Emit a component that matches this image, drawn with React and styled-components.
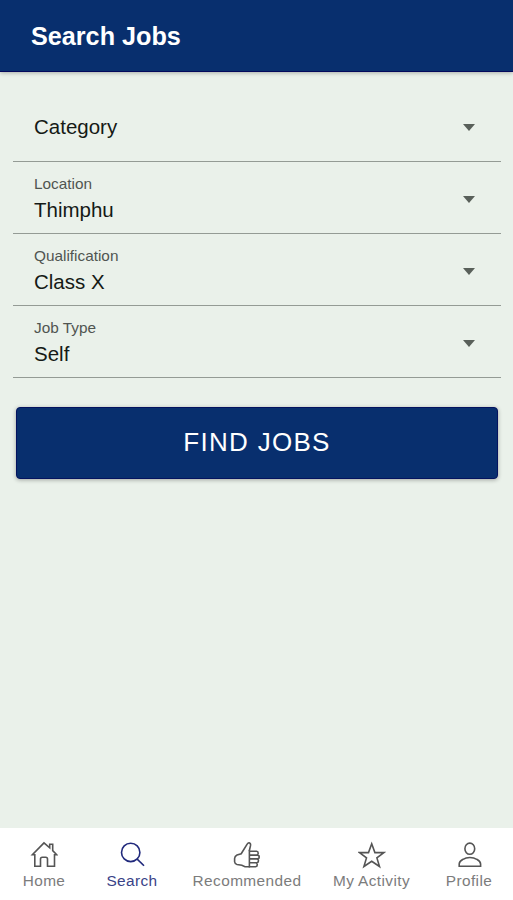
import React, { useState } from "react";
import styled, { createGlobalStyle } from "styled-components";

const HomeIcon = () => (
  <TabIcon viewBox="0 0 28 28">
    <path d="M14 1.9 2.4 13.8h2.4v11.5h5.7V18q0-1.8 1.8-1.8h3.4q1.8 0 1.8 1.8v7.3h7V13.8h2.3l-4.1-4.2V3.2h-3v3.6z" />
  </TabIcon>
);

const SearchIcon = () => (
  <TabIcon viewBox="0 0 28 28">
    <circle cx="12.7" cy="11.4" r="9.2" />
    <path d="m19.2 18.1 6.8 6.7" />
  </TabIcon>
);

const ThumbIcon = () => (
  <TabIcon viewBox="0 0 28 28">
    <path d="M16.2 10.3l1.3-5.6q.4-2.5-1.4-2.9-1.1-.1-1.8 1.1L8.2 12.7 4 14q-2.3 1.1-2.4 3.5v3.3q.2 2.2 2.4 2.7l4.8.7 3.2 1.5h5" />
    <path d="M16.4 10.3h7.2q1.6.1 1.6 1.9t-1.6 1.9h-7.2zM16.4 14.1h8q1.8.1 1.8 1.9t-1.8 1.9h-8zM16.4 17.9h7.4q1.7.1 1.7 1.9t-1.7 2h-7.4zM16.4 21.8h6.2q1.7.1 1.7 1.9t-1.7 2h-6.2z" />
  </TabIcon>
);

const StarIcon = () => (
  <TabIcon viewBox="0 0 28 28">
    <path d="m13.7 2.8 3.2 8.8h9l-7 5.3 2.6 8.6-7.8-5.2-7.8 5.2 2.6-8.6-7-5.3h9z" />
  </TabIcon>
);

const PersonIcon = () => (
  <TabIcon viewBox="0 0 28 28">
    <ellipse cx="14.8" cy="7.7" rx="4.9" ry="5.6" />
    <path d="M4.2 25.3v-2.2q0-2.7 3.8-4.8 2.8-1.8 6.9-1.8t6.9 1.8q3.8 2.1 3.8 4.8v2.2z" />
  </TabIcon>
);

const fields = [
  { label: "Category", value: "" },
  { label: "Location", value: "Thimphu" },
  { label: "Qualification", value: "Class X" },
  { label: "Job Type", value: "Self" },
];

const tabs = [
  { name: "Home", Icon: HomeIcon },
  { name: "Search", Icon: SearchIcon },
  { name: "Recommended", Icon: ThumbIcon },
  { name: "My Activity", Icon: StarIcon },
  { name: "Profile", Icon: PersonIcon },
];

const App = () => {
  const [current, setCurrent] = useState("Search");

  return (
    <>
      <GlobalStyle />
      <PageWrap>
        <Header>
          <HeaderTitle>Search Jobs</HeaderTitle>
        </Header>
        <Content>
          <FieldList>
            {fields.map((field) => (
              <Field key={field.label}>
                <FieldText>
                  {field.value ? <FieldLabel>{field.label}</FieldLabel> : null}
                  <FieldValue $empty={!field.value}>{field.value || field.label}</FieldValue>
                </FieldText>
                <Caret />
              </Field>
            ))}
          </FieldList>
          <FindButton>FIND JOBS</FindButton>
        </Content>
        <TabBar>
          {tabs.map(({ name, Icon }) => (
            <Tab key={name} $active={current === name} onClick={() => setCurrent(name)}>
              <Icon />
              <TabName $active={current === name}>{name}</TabName>
            </Tab>
          ))}
        </TabBar>
      </PageWrap>
    </>
  );
};

export default App;

const GlobalStyle = createGlobalStyle`
  * {
    box-sizing: border-box;
  }
  body {
    margin: 0;
    font-family: "Liberation Sans", Arial, sans-serif;
  }
`;

const PageWrap = styled.div`
  display: flex;
  flex-direction: column;
  width: 100%;
  height: 100vh;
  overflow: hidden;
  background-color: #eaf1ea;
`;

//Header
const Header = styled.header`
  display: flex;
  align-items: center;
  height: 72px;
  padding: 0 31px;
  flex-shrink: 0;
  background-color: #082f6e;
  border-bottom: 1px solid #04095c;
  box-shadow: 0 1px 4px rgba(0, 0, 0, 0.28);
`;

const HeaderTitle = styled.h1`
  margin: 1px 0 0;
  font-size: 25.2px;
  font-weight: 700;
  line-height: 30px;
  color: #fff;
`;

//Search form
const Content = styled.main`
  display: flex;
  flex-direction: column;
  flex: 1;
  padding: 18px 12px 0 13px;
`;

const FieldList = styled.div`
  display: flex;
  flex-direction: column;
`;

const Field = styled.div`
  display: flex;
  align-items: center;
  justify-content: space-between;
  height: 72px;
  padding: 0 26px 0 21px;
  border-bottom: 1px solid #949b95;
  cursor: pointer;
`;

const FieldText = styled.div`
  display: flex;
  flex-direction: column;
`;

const FieldLabel = styled.span`
  margin-top: 1px;
  font-size: 15.35px;
  line-height: 24px;
  color: #505551;
`;

const FieldValue = styled.span`
  margin-top: ${(props) => (props.$empty ? "2px" : "0")};
  font-size: 20.5px;
  line-height: 28px;
  color: #151a16;
`;

const Caret = styled.span`
  width: 0;
  height: 0;
  margin-top: 4px;
  border-left: 6px solid transparent;
  border-right: 6px solid transparent;
  border-top: 7px solid #59605a;
`;

const FindButton = styled.button`
  height: 72px;
  margin: 29px 3px 0;
  padding: 0 0 2px;
  border: 1px solid #04135f;
  border-radius: 4px;
  background-color: #082f6e;
  box-shadow: 0 1px 4px rgba(0, 0, 0, 0.32);
  font-family: inherit;
  font-size: 26px;
  letter-spacing: 1.3px;
  color: #fff;
  cursor: pointer;
`;

//Bottom tabs
const TabBar = styled.nav`
  display: grid;
  grid-template-columns: 88px 88px 142px 107px 1fr;
  height: 72px;
  flex-shrink: 0;
  background-color: #fff;
`;

const Tab = styled.button`
  display: flex;
  flex-direction: column;
  align-items: center;
  padding: 13px 0 0;
  border: none;
  background-color: transparent;
  font-family: inherit;
  color: ${(props) => (props.$active ? "#20297c" : "#555")};
  cursor: pointer;
`;

const TabIcon = styled.svg`
  width: 28px;
  height: 28px;
  fill: none;
  stroke: currentColor;
  stroke-width: 1.6;
`;

const TabName = styled.span`
  margin-top: 3px;
  font-size: 15.4px;
  line-height: 18px;
  letter-spacing: 0.4px;
  white-space: nowrap;
  color: ${(props) => (props.$active ? "#3a4388" : "#7c7c7c")};
`;
